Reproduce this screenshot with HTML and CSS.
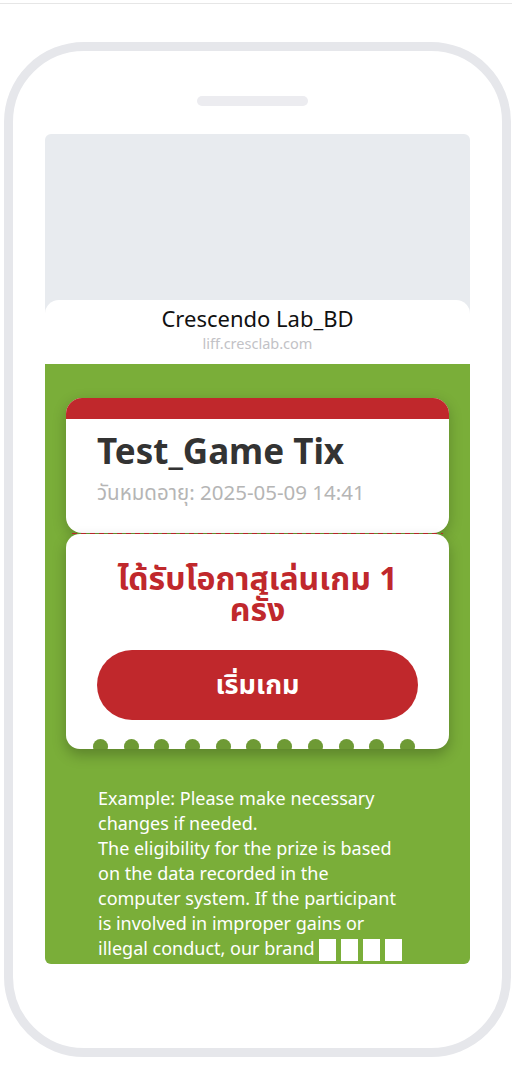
FILE: index.html
```html
<!DOCTYPE html>
<html lang="en">
<head>
    <meta charset="UTF-8">
    <meta name="viewport" content="width=device-width, initial-scale=1.0">
    <title>Game Tix Preview</title>
    <link rel="stylesheet" href="styles.css">
</head>
<body>
    <div class="topline"></div>
    <div class="phone">
        <div class="notch"></div>
        <div class="screen">
            <div class="liff-header">
                <p class="liff-title">Crescendo Lab_BD</p>
                <p class="liff-url">liff.cresclab.com</p>
            </div>
            <div class="game">
                <div class="ticket-top">
                    <div class="ticket-band"></div>
                    <h1 class="ticket-name">Test_Game Tix</h1>
                    <p class="ticket-expire">วันหมดอายุ: 2025-05-09 14:41</p>
                </div>
                <div class="tear"></div>
                <div class="ticket-bottom">
                    <p class="chance">ได้รับโอกาสเล่นเกม 1 ครั้ง</p>
                    <button class="start">เริ่มเกม</button>
                    <div class="holes">
                        <span></span><span></span><span></span><span></span>
                        <span></span><span></span><span></span><span></span>
                        <span></span><span></span><span></span>
                    </div>
                </div>
                <p class="terms">
                    Example: Please make necessary changes if needed.<br>
                    The eligibility for the prize is based on the data recorded in the computer system. If the participant is involved in improper gains or illegal conduct, our brand <span class="tofu"></span><span class="tofu"></span><span class="tofu"></span><span class="tofu"></span>
                </p>
            </div>
        </div>
    </div>
</body>
</html>
```

FILE: styles.css
```css
body {
    margin: 0;
    background-color: #ffffff;
    font-family: "Noto Sans", "Noto Sans Thai", sans-serif;
}
p, h1 {
    margin: 0;
}
.topline {
    width: 512px;
    height: 3px;
    border-bottom: 1px solid #e6e6e6;
}
.phone {
    box-sizing: border-box;
    width: 507px;
    height: 1015px;
    margin: 38px 0 0 4px;
    border: 9px solid #e6e7eb;
    border-radius: 80px;
    padding-top: 45px;
}
.notch {
    width: 111px;
    height: 10px;
    margin-left: 184px;
    border-radius: 5px;
    background-color: #ececf0;
}
.screen {
    width: 425px;
    height: 830px;
    margin: 28px 0 0 32px;
    padding-top: 166px;
    box-sizing: border-box;
    background-color: #e8ebef;
    border-radius: 6px;
    overflow: hidden;
    display: flex;
    flex-direction: column;
}
.liff-header {
    height: 64px;
    box-sizing: border-box;
    padding-top: 4px;
    background-color: #ffffff;
    border-radius: 14px 14px 0 0;
    text-align: center;
}
.liff-title {
    font-size: 22px;
    line-height: 28px;
    color: #111111;
}
.liff-url {
    margin-top: 1px;
    font-size: 14.5px;
    line-height: 20px;
    color: #c2c2c6;
}
.game {
    flex: 1;
    padding: 34px 21px 0;
    background-color: #7aae39;
    overflow: hidden;
}
.ticket-top {
    background-color: #ffffff;
    border-radius: 16px;
    overflow: hidden;
    padding-bottom: 27px;
    box-shadow: 0 4px 14px rgba(0, 0, 0, 0.22);
}
.ticket-band {
    height: 21px;
    margin-bottom: 10px;
    background-color: #c0282c;
}
.ticket-name {
    padding-left: 31px;
    font-size: 35px;
    line-height: 44px;
    font-weight: bold;
    color: #333333;
}
.ticket-expire {
    margin-top: 5px;
    padding-left: 31px;
    font-size: 20.5px;
    line-height: 28px;
    color: #b5b5b5;
}
.tear {
    height: 1px;
    margin: 0 6px;
    background: repeating-linear-gradient(to right, #c0282c 0 5px, transparent 5px 9px);
}
.ticket-bottom {
    position: relative;
    background-color: #ffffff;
    border-radius: 14px;
    overflow: hidden;
    padding: 28px 31px 29px;
    text-align: center;
    box-shadow: 0 6px 14px rgba(0, 0, 0, 0.25);
}
.chance {
    font-size: 32px;
    line-height: 31px;
    font-weight: bold;
    color: #c0282c;
}
.start {
    display: block;
    width: 100%;
    height: 70px;
    margin-top: 26px;
    border: none;
    border-radius: 35px;
    background-color: #c0282c;
    color: #ffffff;
    font-family: inherit;
    font-size: 27px;
    font-weight: bold;
}
.holes {
    position: absolute;
    left: 0;
    right: 0;
    bottom: -5px;
    display: flex;
    padding-left: 27px;
    gap: 15.7px;
}
.holes span {
    width: 15px;
    height: 15px;
    border-radius: 50%;
    background-color: #6e9a35;
}
.terms {
    margin-top: 37px;
    padding: 0 39px 0 32px;
    font-size: 18px;
    line-height: 25px;
    color: #ffffff;
}
.tofu {
    display: inline-block;
    width: 17px;
    height: 22px;
    margin-right: 5px;
    vertical-align: -6px;
    background-color: #ffffff;
}
```
